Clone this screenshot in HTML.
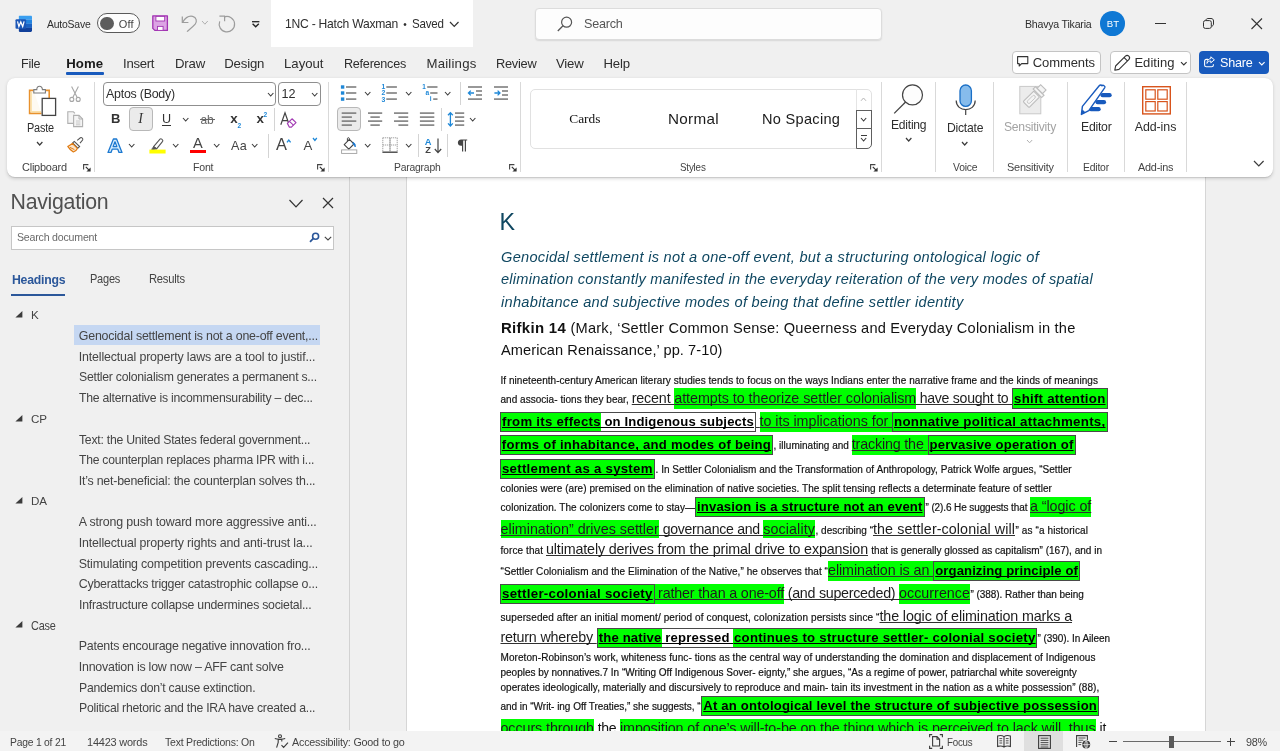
<!DOCTYPE html>
<html><head><meta charset="utf-8"><title>1NC - Hatch Waxman - Word</title>
<style>
html,body{margin:0;padding:0;}
body{width:1280px;height:751px;overflow:hidden;position:relative;background:#f0f0f0;font-family:"Liberation Sans",sans-serif;color:#242424;}
.a{position:absolute;box-sizing:border-box;}
.t{position:absolute;white-space:pre;transform-origin:0 0;}
#w{position:absolute;left:0;top:0;width:1280px;height:751px;will-change:transform;}
svg{position:absolute;overflow:visible;}
.S{color:#111;-webkit-text-stroke:0.18px #111;}
.U,.HU,.B,.BH{text-decoration:underline;text-decoration-thickness:1px;text-underline-offset:1px;text-decoration-skip-ink:none;}
.U,.HU{color:#1c1c1c;text-decoration-color:#303030;}
.B,.BH{font-weight:bold;text-decoration-thickness:1.1px;}
.P{color:#111;}
.B,.BH{color:#000;}
.hd{color:#0f4761;}
.hi{color:#0f4761;font-style:italic;}
.nv{color:#444;}
.ui{color:#2e2e2e;}
.gl{color:#444;}
</style></head><body><div id="w">

<div class="a" style="left:350px;top:177px;width:930px;height:554px;background:#f0f0f0;"></div>
<div class="a" style="left:406px;top:177px;width:800px;height:554px;background:#fff;border-left:1px solid #d6d6d6;border-right:1px solid #d6d6d6;"></div>
<span class="t hd" style="left:499.6px;top:208px;font-size:23.3px;line-height:28px;">K</span>
<span class="t hi" style="left:501px;top:248px;font-size:14.6px;line-height:18px;letter-spacing:0.285px;">Genocidal settlement is not a one-off event, but a structuring ontological logic of</span>
<span class="t hi" style="left:501px;top:270px;font-size:14.6px;line-height:18px;letter-spacing:0.25px;">elimination constantly manifested in the everyday reiteration of the very modes of spatial</span>
<span class="t hi" style="left:501px;top:293px;font-size:14.6px;line-height:18px;letter-spacing:0.291px;">inhabitance and subjective modes of being that define settler identity</span>
<span class="t P" style="left:501px;top:319px;font-size:14.6px;line-height:18px;font-weight:bold;letter-spacing:0.292px;transform:scaleX(1.0243);">Rifkin 14</span>
<span class="t P" style="left:570.5px;top:319px;font-size:14.6px;line-height:18px;letter-spacing:0.189px;">(Mark, ‘Settler Common Sense: Queerness and Everyday Colonialism in the</span>
<span class="t P" style="left:501px;top:341px;font-size:14.6px;line-height:18px;letter-spacing:0.069px;">American Renaissance,’ pp. 7-10)</span>
<span class="t S" style="left:500.5px;top:374px;font-size:10px;line-height:13px;letter-spacing:0.049px;">If nineteenth-century American literary studies tends to focus on the ways Indians enter the narrative frame and the kinds of meanings</span>
<span class="t S" style="left:500.5px;top:393px;font-size:10px;line-height:13px;letter-spacing:0.031px;">and associa- tions they bear, </span>
<span class="t U" style="left:631.75px;top:389px;font-size:14.3px;line-height:18px;letter-spacing:-0.174px;">recent </span>
<div class="a" style="left:674.25px;top:388.1px;width:242px;height:20.8px;background:#00ff00;"></div>
<span class="t HU" style="left:674.25px;top:389px;font-size:14.3px;line-height:18px;letter-spacing:-0.029px;">attempts to theorize settler colonialism</span>
<span class="t U" style="left:916.25px;top:389px;font-size:14.3px;line-height:18px;letter-spacing:-0.286px;transform:scaleX(0.9879);"> have sought to </span>
<div class="a" style="left:1012.25px;top:388.1px;width:94.75px;height:20.8px;background:#00ff00;"></div>
<span class="t B" style="left:1014px;top:390px;font-size:13.1px;line-height:17px;letter-spacing:0.262px;transform:scaleX(1.0111);">shift attention</span>
<div class="a" style="left:500.5px;top:412px;width:100.5px;height:20px;background:#00ff00;"></div>
<span class="t B" style="left:501.8px;top:413px;font-size:13.1px;line-height:17px;letter-spacing:0.262px;transform:scaleX(1.0075);">from its effects</span>
<span class="t B" style="left:600.6px;top:413px;font-size:13.1px;line-height:17px;letter-spacing:0.153px;"> on Indigenous subjects</span>
<span class="t U" style="left:755.75px;top:412px;font-size:14.3px;line-height:18px;"> </span>
<div class="a" style="left:759.5px;top:412px;width:132.75px;height:20px;background:#00ff00;"></div>
<span class="t HU" style="left:759.5px;top:412px;font-size:14.3px;line-height:18px;letter-spacing:-0.031px;">to its implications for </span>
<div class="a" style="left:892.25px;top:412px;width:214.75px;height:20px;background:#00ff00;"></div>
<span class="t B" style="left:894px;top:413px;font-size:13.1px;line-height:17px;letter-spacing:0.262px;transform:scaleX(1.0181);">nonnative political attachments,</span>
<div class="a" style="left:500.5px;top:435.3px;width:272.25px;height:20px;background:#00ff00;"></div>
<span class="t B" style="left:501.8px;top:436px;font-size:13.1px;line-height:17px;letter-spacing:0.237px;">forms of inhabitance, and modes of being</span>
<span class="t S" style="left:773.5px;top:439px;font-size:10px;line-height:13px;letter-spacing:0.022px;">, illuminating and </span>
<div class="a" style="left:851.75px;top:435.3px;width:75.75px;height:20px;background:#00ff00;"></div>
<span class="t HU" style="left:851.75px;top:435px;font-size:14.3px;line-height:18px;letter-spacing:-0.165px;">tracking the </span>
<div class="a" style="left:927.5px;top:435.3px;width:147.5px;height:20px;background:#00ff00;"></div>
<span class="t B" style="left:929.5px;top:436px;font-size:13.1px;line-height:17px;letter-spacing:0.195px;">pervasive operation of</span>
<div class="a" style="left:500.5px;top:458.7px;width:153.75px;height:20px;background:#00ff00;"></div>
<span class="t B" style="left:501.8px;top:460px;font-size:13.1px;line-height:17px;letter-spacing:0.262px;transform:scaleX(1.0104);">settlement as a system</span>
<span class="t S" style="left:655.5px;top:463px;font-size:10px;line-height:13px;letter-spacing:0.038px;">. In Settler Colonialism and the Transformation of Anthropology, Patrick Wolfe argues, “Settler</span>
<span class="t S" style="left:500.5px;top:482px;font-size:10px;line-height:13px;letter-spacing:0.054px;">colonies were (are) premised on the elimination of native societies. The split tensing reflects a determinate feature of settler</span>
<span class="t S" style="left:500.5px;top:501px;font-size:10px;line-height:13px;letter-spacing:0.043px;">colonization. The colonizers come to stay—</span>
<div class="a" style="left:695px;top:497.15px;width:229.25px;height:20px;background:#00ff00;"></div>
<span class="t B" style="left:697px;top:498px;font-size:13.1px;line-height:17px;letter-spacing:0.16px;">invasion is a structure not an event</span>
<span class="t S" style="left:925.5px;top:501px;font-size:10px;line-height:13px;letter-spacing:-0.111px;">” (2).6 He suggests that </span>
<div class="a" style="left:1030px;top:497.15px;width:61.25px;height:20px;background:#00ff00;"></div>
<span class="t HU" style="left:1030px;top:497px;font-size:14.3px;line-height:18px;letter-spacing:-0.067px;">a “logic of</span>
<div class="a" style="left:500.5px;top:520.05px;width:158.25px;height:17.9px;background:#00ff00;"></div>
<span class="t HU" style="left:500.5px;top:520px;font-size:14.3px;line-height:18px;letter-spacing:0.005px;">elimination” drives settler</span>
<span class="t U" style="left:658.75px;top:520px;font-size:14.3px;line-height:18px;letter-spacing:-0.286px;transform:scaleX(0.9866);"> governance and </span>
<div class="a" style="left:763.25px;top:520.05px;width:51.75px;height:17.9px;background:#00ff00;"></div>
<span class="t HU" style="left:763.25px;top:520px;font-size:14.3px;line-height:18px;letter-spacing:0.099px;">sociality</span>
<span class="t S" style="left:815.5px;top:524px;font-size:10px;line-height:13px;letter-spacing:0.018px;">, describing “</span>
<span class="t U" style="left:873px;top:520px;font-size:14.3px;line-height:18px;letter-spacing:0.086px;">the settler-colonial will</span>
<span class="t S" style="left:1015.5px;top:524px;font-size:10px;line-height:13px;letter-spacing:0.107px;">” as “a historical</span>
<span class="t S" style="left:500.5px;top:544px;font-size:10px;line-height:13px;letter-spacing:0.094px;">force that </span>
<span class="t U" style="left:546px;top:540px;font-size:14.3px;line-height:18px;letter-spacing:-0.147px;">ultimately derives from the primal drive to expansion</span>
<span class="t S" style="left:868.5px;top:544px;font-size:10px;line-height:13px;letter-spacing:0.011px;"> that is generally glossed as capitalism” (167), and in</span>
<span class="t S" style="left:500.5px;top:565px;font-size:10px;line-height:13px;letter-spacing:0.068px;">“Settler Colonialism and the Elimination of the Native,” he observes that “</span>
<div class="a" style="left:828px;top:561.2px;width:105.25px;height:20px;background:#00ff00;"></div>
<span class="t HU" style="left:828px;top:561px;font-size:14.3px;line-height:18px;letter-spacing:-0.069px;">elimination is an </span>
<div class="a" style="left:933.25px;top:561.2px;width:146.25px;height:20px;background:#00ff00;"></div>
<span class="t B" style="left:935.25px;top:562px;font-size:13.1px;line-height:17px;letter-spacing:0.102px;">organizing principle of</span>
<div class="a" style="left:500.5px;top:584.15px;width:153.75px;height:20px;background:#00ff00;"></div>
<span class="t B" style="left:501.8px;top:585px;font-size:13.1px;line-height:17px;letter-spacing:0.262px;transform:scaleX(1.0169);">settler-colonial society</span>
<div class="a" style="left:654.25px;top:584.15px;width:129.75px;height:20px;background:#00ff00;"></div>
<span class="t HU" style="left:654.25px;top:584px;font-size:14.3px;line-height:18px;letter-spacing:-0.16px;"> rather than a one-off</span>
<span class="t U" style="left:784px;top:584px;font-size:14.3px;line-height:18px;letter-spacing:-0.279px;"> (and superceded) </span>
<div class="a" style="left:899px;top:584.15px;width:71px;height:20px;background:#00ff00;"></div>
<span class="t HU" style="left:899px;top:584px;font-size:14.3px;line-height:18px;letter-spacing:0.027px;">occurrence</span>
<span class="t S" style="left:970.5px;top:588px;font-size:10px;line-height:13px;letter-spacing:-0.049px;">” (388). Rather than being</span>
<span class="t S" style="left:500.5px;top:611px;font-size:10px;line-height:13px;letter-spacing:0.117px;">superseded after an initial moment/ period of conquest, colonization persists since “</span>
<span class="t U" style="left:879.5px;top:607px;font-size:14.3px;line-height:18px;letter-spacing:-0.118px;">the logic of elimination marks a</span>
<span class="t U" style="left:500.5px;top:628px;font-size:14.3px;line-height:18px;letter-spacing:-0.206px;">return whereby </span>
<div class="a" style="left:596.75px;top:628.1px;width:65.25px;height:20px;background:#00ff00;"></div>
<div class="a" style="left:733px;top:628.1px;width:303.75px;height:20px;background:#00ff00;"></div>
<span class="t B" style="left:598.75px;top:629px;font-size:13.1px;line-height:17px;letter-spacing:0.163px;">the native</span>
<span class="t B" style="left:661.5px;top:629px;font-size:13.1px;line-height:17px;letter-spacing:0.193px;"> repressed </span>
<span class="t B" style="left:733.5px;top:629px;font-size:13.1px;line-height:17px;letter-spacing:0.262px;transform:scaleX(1.0051);">continues to structure settler- colonial society</span>
<span class="t S" style="left:1037.5px;top:632px;font-size:10px;line-height:13px;letter-spacing:-0.049px;">” (390). In Aileen</span>
<span class="t S" style="left:500.5px;top:651px;font-size:10px;line-height:13px;letter-spacing:0.077px;">Moreton-Robinson’s work, whiteness func- tions as the central way of understanding the domination and displacement of Indigenous</span>
<span class="t S" style="left:500.5px;top:666px;font-size:10px;line-height:13px;letter-spacing:-0.014px;">peoples by nonnatives.7 In “Writing Off Indigenous Sover- eignty,” she argues, “As a regime of power, patriarchal white sovereignty</span>
<span class="t S" style="left:500.5px;top:681px;font-size:10px;line-height:13px;letter-spacing:0.055px;">operates ideologically, materially and discursively to reproduce and main- tain its investment in the nation as a white possession” (88),</span>
<span class="t S" style="left:500.5px;top:700px;font-size:10px;line-height:13px;letter-spacing:-0.029px;">and in “Writ- ing Off Treaties,” she suggests, “</span>
<div class="a" style="left:701.25px;top:695.9px;width:397.5px;height:20px;background:#00ff00;"></div>
<span class="t B" style="left:703.25px;top:697px;font-size:13.1px;line-height:17px;letter-spacing:0.19px;">At an ontological level the structure of subjective possession</span>
<div class="a" style="left:500.5px;top:719.1px;width:93.5px;height:17.9px;background:#00ff00;"></div>
<span class="t HU" style="left:500.5px;top:719px;font-size:14.3px;line-height:18px;letter-spacing:-0.077px;">occurs through</span>
<span class="t P" style="left:594px;top:719px;font-size:14.3px;line-height:18px;letter-spacing:-0.286px;transform:scaleX(0.9849);"> the </span>
<div class="a" style="left:620px;top:719.1px;width:475.5px;height:17.9px;background:#00ff00;"></div>
<span class="t HU" style="left:620px;top:719px;font-size:14.3px;line-height:18px;letter-spacing:-0.091px;">imposition of one’s will-to-be on the thing which is perceived to lack will, thus</span>
<span class="t P" style="left:1095.5px;top:719px;font-size:14.3px;line-height:18px;letter-spacing:-0.286px;transform:scaleX(0.974);"> it</span>
<div class="a" style="left:1012.25px;top:388.1px;width:95.25px;height:20.8px;border:1px solid #4a4a4a;"></div>
<div class="a" style="left:500px;top:412px;width:256.25px;height:20px;border:1px solid #4a4a4a;"></div>
<div class="a" style="left:892.25px;top:412px;width:215.25px;height:20px;border:1px solid #4a4a4a;"></div>
<div class="a" style="left:500px;top:435.3px;width:273.25px;height:20px;border:1px solid #4a4a4a;"></div>
<div class="a" style="left:927.5px;top:435.3px;width:148px;height:20px;border:1px solid #4a4a4a;"></div>
<div class="a" style="left:500px;top:458.7px;width:154.75px;height:20px;border:1px solid #4a4a4a;"></div>
<div class="a" style="left:695px;top:497.15px;width:229.75px;height:20px;border:1px solid #4a4a4a;"></div>
<div class="a" style="left:933.25px;top:561.2px;width:146.75px;height:20px;border:1px solid #4a4a4a;"></div>
<div class="a" style="left:500px;top:584.15px;width:154.75px;height:20px;border:1px solid #4a4a4a;"></div>
<div class="a" style="left:596.75px;top:628.1px;width:440.5px;height:20px;border:1px solid #4a4a4a;"></div>
<div class="a" style="left:701.25px;top:695.9px;width:398px;height:20px;border:1px solid #4a4a4a;"></div>
<div class="a" style="left:0px;top:177px;width:350px;height:552.5px;background:#f0f0f0;border-right:1px solid #d2d2d2;"></div>
<span class="t ui" style="left:10.6px;top:189px;font-size:21.3px;line-height:26px;color:#505050;letter-spacing:-0.284px;">Navigation</span>
<svg style="left:288px;top:197px" width="16" height="12" viewBox="0 0 16 12"><path d="M1.5 3 L8 9.8 L14.5 3" fill="none" stroke="#333" stroke-width="1.2"/></svg>
<svg style="left:322px;top:197px" width="12" height="12" viewBox="0 0 12 12"><path d="M1 1 L11 11 M11 1 L1 11" fill="none" stroke="#333" stroke-width="1.2"/></svg>
<div class="a" style="left:11px;top:226px;width:323px;height:24px;background:#fff;border:1px solid #c6c6c6;"></div>
<span class="t ui" style="left:17px;top:230px;font-size:11px;line-height:14px;color:#6a6a6a;letter-spacing:-0.22px;transform:scaleX(0.9648);">Search document</span>
<svg style="left:309px;top:232px" width="11" height="11" viewBox="0 0 11 11"><circle cx="6.6" cy="4.2" r="3" fill="none" stroke="#2b579a" stroke-width="1.6"/><path d="M4.4 6.4 L1 9.8" stroke="#2b579a" stroke-width="1.8" fill="none"/></svg>
<svg style="left:324px;top:236px" width="8" height="5" viewBox="0 0 8 5"><path d="M0.8 0.8 L4 4 L7.2 0.8" fill="none" stroke="#444" stroke-width="1.1"/></svg>
<span class="t ui" style="left:11.5px;top:272px;font-size:12.6px;line-height:16px;color:#2b579a;font-weight:bold;letter-spacing:-0.252px;transform:scaleX(0.9749);">Headings</span>
<div class="a" style="left:11px;top:294px;width:54px;height:2px;background:#2b579a;"></div>
<span class="t nv" style="left:90.2px;top:271px;font-size:12.4px;line-height:16px;letter-spacing:-0.248px;transform:scaleX(0.8879);">Pages</span>
<span class="t nv" style="left:148.5px;top:271px;font-size:12.4px;line-height:16px;letter-spacing:-0.248px;transform:scaleX(0.9042);">Results</span>
<svg style="left:14.5px;top:311.1px" width="8" height="7" viewBox="0 0 8 7"><path d="M7.4 0 L7.4 6.6 L0.4 6.6 Z" fill="#3b3b3b"/></svg>
<span class="t nv" style="left:30.9px;top:308px;font-size:11.6px;line-height:14px;">K</span>
<div class="a" style="left:74px;top:324.88px;width:246.2px;height:20.2px;background:#c5d7f2;"></div>
<span class="t nv" style="left:78.8px;top:328px;font-size:12.4px;line-height:16px;letter-spacing:-0.211px;">Genocidal settlement is not a one-off event,...</span>
<span class="t nv" style="left:78.8px;top:349px;font-size:12.4px;line-height:16px;letter-spacing:-0.16px;">Intellectual property laws are a tool to justif...</span>
<span class="t nv" style="left:78.8px;top:369px;font-size:12.4px;line-height:16px;letter-spacing:-0.248px;transform:scaleX(0.9881);">Settler colonialism generates a permanent s...</span>
<span class="t nv" style="left:78.8px;top:390px;font-size:12.4px;line-height:16px;letter-spacing:-0.248px;transform:scaleX(0.9881);">The alternative is incommensurability – dec...</span>
<svg style="left:14.5px;top:414.5px" width="8" height="7" viewBox="0 0 8 7"><path d="M7.4 0 L7.4 6.6 L0.4 6.6 Z" fill="#3b3b3b"/></svg>
<span class="t nv" style="left:30.9px;top:412px;font-size:11.6px;line-height:14px;">CP</span>
<span class="t nv" style="left:78.8px;top:432px;font-size:12.4px;line-height:16px;letter-spacing:-0.248px;transform:scaleX(0.9879);">Text: the United States federal government...</span>
<span class="t nv" style="left:78.8px;top:452px;font-size:12.4px;line-height:16px;letter-spacing:-0.248px;transform:scaleX(0.9791);">The counterplan replaces pharma IPR with i...</span>
<span class="t nv" style="left:78.8px;top:473px;font-size:12.4px;line-height:16px;letter-spacing:-0.229px;">It’s net-beneficial: the counterplan solves th...</span>
<svg style="left:14.5px;top:497.22px" width="8" height="7" viewBox="0 0 8 7"><path d="M7.4 0 L7.4 6.6 L0.4 6.6 Z" fill="#3b3b3b"/></svg>
<span class="t nv" style="left:30.9px;top:494px;font-size:11.6px;line-height:14px;">DA</span>
<span class="t nv" style="left:78.8px;top:514px;font-size:12.4px;line-height:16px;letter-spacing:-0.168px;">A strong push toward more aggressive anti...</span>
<span class="t nv" style="left:78.8px;top:535px;font-size:12.4px;line-height:16px;letter-spacing:-0.15px;">Intellectual property rights and anti-trust la...</span>
<span class="t nv" style="left:78.8px;top:556px;font-size:12.4px;line-height:16px;letter-spacing:-0.21px;">Stimulating competition prevents cascading...</span>
<span class="t nv" style="left:78.8px;top:576px;font-size:12.4px;line-height:16px;letter-spacing:-0.248px;">Cyberattacks trigger catastrophic collapse o...</span>
<span class="t nv" style="left:78.8px;top:597px;font-size:12.4px;line-height:16px;letter-spacing:-0.248px;transform:scaleX(0.9912);">Infrastructure collapse undermines societal...</span>
<svg style="left:14.5px;top:621.3px" width="8" height="7" viewBox="0 0 8 7"><path d="M7.4 0 L7.4 6.6 L0.4 6.6 Z" fill="#3b3b3b"/></svg>
<span class="t nv" style="left:30.9px;top:618px;font-size:12.4px;line-height:16px;letter-spacing:-0.248px;transform:scaleX(0.8803);">Case</span>
<span class="t nv" style="left:78.8px;top:638px;font-size:12.4px;line-height:16px;letter-spacing:-0.248px;">Patents encourage negative innovation fro...</span>
<span class="t nv" style="left:78.8px;top:659px;font-size:12.4px;line-height:16px;letter-spacing:-0.229px;">Innovation is low now – AFF cant solve</span>
<span class="t nv" style="left:78.8px;top:680px;font-size:12.4px;line-height:16px;letter-spacing:-0.248px;transform:scaleX(0.984);">Pandemics don’t cause extinction.</span>
<span class="t nv" style="left:78.8px;top:700px;font-size:12.4px;line-height:16px;letter-spacing:-0.248px;transform:scaleX(0.9862);">Political rhetoric and the IRA have created a...</span>
<svg style="left:14.5px;top:14.5px" width="17.5" height="17.5" viewBox="0 0 17.5 17.5" ><defs><clipPath id="wc"><rect x="3.6" y="0.5" width="13.4" height="16.4" rx="1.3"/></clipPath></defs>
<g clip-path="url(#wc)"><rect x="3.6" y="0.5" width="13.4" height="4.2" fill="#3a9ff0"/><rect x="3.6" y="4.6" width="13.4" height="4.2" fill="#2384e0"/><rect x="3.6" y="8.7" width="13.4" height="4.2" fill="#1a62c4"/><rect x="3.6" y="12.8" width="13.4" height="4.2" fill="#11409a"/></g>
<rect x="0.5" y="4.2" width="10.6" height="9.6" rx="1.1" fill="#1b56b6"/>
<path d="M2.5 6.4 L3.9 11.6 L5.8 6.9 L7.7 11.6 L9.1 6.4" fill="none" stroke="#fff" stroke-width="1.25" stroke-linejoin="miter"/></svg>
<span class="t ui" style="left:47px;top:17px;font-size:11.6px;line-height:14px;letter-spacing:-0.232px;transform:scaleX(0.8983);">AutoSave</span>
<div class="a" style="left:97px;top:13.2px;width:43px;height:20.2px;border:1px solid #5a5a5a;border-radius:11px;background:#fdfdfd;"></div>
<div class="a" style="left:100.3px;top:16.5px;width:13.4px;height:13.4px;background:#5d5d5d;border-radius:7px;"></div>
<span class="t ui" style="left:118.75px;top:17px;font-size:11px;line-height:14px;color:#444;letter-spacing:0.172px;">Off</span>
<svg style="left:152px;top:15px" width="16.4" height="16.4" viewBox="0 0 16.4 16.4" ><path d="M0.8 0.8 H15.4 V15.4 H2.8 L0.8 13.4 Z" fill="#dca4e4" stroke="#a234b2" stroke-width="1.3" stroke-linejoin="round"/>
<rect x="3.9" y="1.4" width="8.8" height="4.6" fill="#fff" stroke="#a234b2" stroke-width="0.9"/><rect x="5.5" y="11.4" width="5.6" height="4" fill="#fff" stroke="#a234b2" stroke-width="0.9"/></svg>
<svg style="left:181px;top:14.5px" width="17" height="18" viewBox="0 0 17 18" ><path d="M1.3 1.4 V7.5 H7.4" fill="none" stroke="#9c9c9c" stroke-width="1.2"/><path d="M1.7 7.1 C4 3.2 8 0.6 11.6 1.3 C15.6 2.2 16.2 6.6 14.2 9.2 C12 11.8 8.4 14.4 6 16.6" fill="none" stroke="#9c9c9c" stroke-width="1.2"/></svg>
<svg style="left:201.2px;top:20.4px" width="7.8" height="5.2" viewBox="0 0 7.8 5.2" ><path d="M1 1 L3.9 4.2 L6.8 1" fill="none" stroke="#b0b0b0" stroke-width="1"/></svg>
<svg style="left:218px;top:14.5px" width="18" height="18" viewBox="0 0 18 18" ><path d="M1.4 1.2 H6.6 V6.2" fill="none" stroke="#9c9c9c" stroke-width="1.2"/><path d="M6.4 1.9 A7.7 7.7 0 1 1 1.7 6.4" fill="none" stroke="#9c9c9c" stroke-width="1.2"/></svg>
<svg style="left:252px;top:20.6px" width="7.4" height="6.6" viewBox="0 0 7.4 6.6" ><path d="M0 0.7 H7.4" stroke="#222" stroke-width="1.3"/><path d="M0.6 2.8 L3.7 5.7 L6.8 2.8" fill="none" stroke="#222" stroke-width="1.4"/></svg>
<div class="a" style="left:271px;top:0px;width:201.5px;height:47px;background:#fff;"></div>
<span class="t ui" style="left:285.2px;top:16px;font-size:12.6px;line-height:16px;letter-spacing:-0.252px;transform:scaleX(0.9627);">1NC - Hatch Waxman</span>
<span class="t ui" style="left:403.2px;top:18px;font-size:10px;line-height:13px;">•</span>
<span class="t ui" style="left:412.3px;top:16px;font-size:12.6px;line-height:16px;letter-spacing:-0.252px;transform:scaleX(0.9199);">Saved</span>
<svg style="left:449.25px;top:20.55px" width="10.5" height="6.5" viewBox="0 0 10.5 6.5" ><path d="M1 1 L5.25 5.5 L9.5 1" fill="none" stroke="#333" stroke-width="1.2"/></svg>
<div class="a" style="left:535px;top:7.5px;width:346.5px;height:32px;background:#fdfdfd;border:1px solid #dcdcdc;border-radius:4px;box-shadow:0 1px 1.5px rgba(0,0,0,0.10);"></div>
<svg style="left:557px;top:16px" width="16" height="16" viewBox="0 0 16 16" ><circle cx="9.6" cy="6.2" r="5" fill="none" stroke="#555" stroke-width="1.2"/><path d="M6 9.8 L0.8 15" stroke="#555" stroke-width="1.3"/></svg>
<span class="t ui" style="left:584px;top:15px;font-size:12.8px;line-height:17px;color:#555;letter-spacing:-0.256px;transform:scaleX(0.9869);">Search</span>
<span class="t ui" style="left:1024.5px;top:17px;font-size:11px;line-height:14px;letter-spacing:-0.22px;transform:scaleX(0.9627);">Bhavya Tikaria</span>
<div class="a" style="left:1100px;top:11.2px;width:24.6px;height:24.6px;background:#0f78d4;border-radius:50%;"></div>
<span class="t" style="left:1106.8px;top:17px;font-size:9.6px;line-height:13px;color:#fff;">BT</span>
<div class="a" style="left:1155px;top:22.5px;width:11px;height:1px;background:#333;"></div>
<svg style="left:1203px;top:18px" width="11" height="11" viewBox="0 0 11 11" ><rect x="0.5" y="2.6" width="7.8" height="7.8" rx="1.8" fill="none" stroke="#333" stroke-width="1"/><path d="M2.8 2.4 C3 1.2 3.8 0.5 5 0.5 H8 C9.6 0.5 10.5 1.4 10.5 3 V6 C10.5 7.2 9.8 8 8.6 8.2" fill="none" stroke="#333" stroke-width="1"/></svg>
<svg style="left:1251px;top:18px" width="11.5" height="11.5" viewBox="0 0 11.5 11.5" ><path d="M0.5 0.5 L11 11 M11 0.5 L0.5 11" stroke="#333" stroke-width="1.1"/></svg>
<span class="t ui" style="left:20.75px;top:55px;font-size:13.2px;line-height:17px;letter-spacing:-0.264px;transform:scaleX(0.9533);">File</span>
<span class="t ui" style="left:123px;top:55px;font-size:13.2px;line-height:17px;letter-spacing:-0.264px;transform:scaleX(0.9952);">Insert</span>
<span class="t ui" style="left:175px;top:55px;font-size:13.2px;line-height:17px;letter-spacing:-0.195px;">Draw</span>
<span class="t ui" style="left:224.25px;top:55px;font-size:13.2px;line-height:17px;letter-spacing:-0.177px;">Design</span>
<span class="t ui" style="left:284px;top:55px;font-size:13.2px;line-height:17px;letter-spacing:-0.018px;">Layout</span>
<span class="t ui" style="left:344px;top:55px;font-size:13.2px;line-height:17px;letter-spacing:-0.264px;transform:scaleX(0.9566);">References</span>
<span class="t ui" style="left:426.5px;top:55px;font-size:13.2px;line-height:17px;letter-spacing:0.203px;">Mailings</span>
<span class="t ui" style="left:496px;top:55px;font-size:13.2px;line-height:17px;letter-spacing:-0.264px;transform:scaleX(0.972);">Review</span>
<span class="t ui" style="left:556px;top:55px;font-size:13.2px;line-height:17px;letter-spacing:-0.215px;">View</span>
<span class="t ui" style="left:603.5px;top:55px;font-size:13.2px;line-height:17px;letter-spacing:-0.156px;">Help</span>
<span class="t ui" style="left:66.25px;top:55px;font-size:13.2px;line-height:17px;font-weight:bold;color:#1a1a1a;letter-spacing:0.027px;">Home</span>
<div class="a" style="left:66px;top:72.3px;width:37.6px;height:2.3px;background:#185abd;border-radius:1px;"></div>
<div class="a" style="left:1012px;top:50.5px;width:89px;height:23.5px;background:#fff;border:1px solid #c4c4c4;border-radius:4px;"></div>
<svg style="left:1017px;top:56px" width="11.5" height="11" viewBox="0 0 11.5 11" ><path d="M0.6 0.6 H10.8 V7.6 H4.6 L2.2 10 V7.6 H0.6 Z" fill="none" stroke="#333" stroke-width="1.1" stroke-linejoin="round"/></svg>
<span class="t ui" style="left:1032.7px;top:54px;font-size:13px;line-height:17px;letter-spacing:-0.07px;">Comments</span>
<div class="a" style="left:1109.5px;top:50.5px;width:81.5px;height:23.5px;background:#fff;border:1px solid #c4c4c4;border-radius:4px;"></div>
<svg style="left:1114px;top:54.5px" width="16" height="16" viewBox="0 0 16 16" ><path d="M11.4 1.2 C12.4 0.2 14 0.4 14.8 1.2 C15.6 2 15.8 3.6 14.8 4.6 L5 14.4 L0.8 15.2 L1.6 11 Z M10.2 2.6 L13.4 5.8" fill="none" stroke="#333" stroke-width="1.1" stroke-linejoin="round"/></svg>
<span class="t ui" style="left:1134.4px;top:54px;font-size:13px;line-height:17px;letter-spacing:0.05px;">Editing</span>
<svg style="left:1180.2px;top:60.5px" width="7.6" height="5" viewBox="0 0 7.6 5" ><path d="M1 1 L3.8 4 L6.6 1" fill="none" stroke="#333" stroke-width="1.1"/></svg>
<div class="a" style="left:1199px;top:50.5px;width:70px;height:23.5px;background:#185abd;border-radius:4px;"></div>
<svg style="left:1203.5px;top:56px" width="11" height="11.5" viewBox="0 0 11 11.5" ><path d="M4 3.4 H2.4 C1.2 3.4 0.6 4 0.6 5.2 V9 C0.6 10.2 1.2 10.8 2.4 10.8 H7.6 C8.8 10.8 9.4 10.2 9.4 9 V8.2" fill="none" stroke="#fff" stroke-width="1.1"/><path d="M6.8 0.8 L10.4 3.8 L6.8 6.8 V5 C5 5 3.8 5.6 3 7.4 C3 4.6 4.4 2.8 6.8 2.6 Z" fill="none" stroke="#fff" stroke-width="1" stroke-linejoin="round"/></svg>
<span class="t" style="left:1220.2px;top:54px;font-size:13px;line-height:17px;color:#fff;letter-spacing:-0.26px;transform:scaleX(0.97);">Share</span>
<svg style="left:1257.5px;top:60.5px" width="7.6" height="5" viewBox="0 0 7.6 5" ><path d="M1 1 L3.8 4 L6.6 1" fill="none" stroke="#fff" stroke-width="1.1"/></svg>
<div class="a" style="left:7px;top:77.5px;width:1266px;height:99.7px;background:#fff;border-radius:8px;box-shadow:0 1.6px 3.6px rgba(0,0,0,0.14),0 0.3px 0.9px rgba(0,0,0,0.11);"></div>
<svg style="left:27px;top:85px" width="30" height="32" viewBox="0 0 30 32" ><path d="M6.6 5.4 H2.6 V28.4 H14.5" fill="#fefaf2" stroke="#e8912d" stroke-width="1.6"/><path d="M4.2 7 V26.8 H14" fill="none" stroke="#fbe0a8" stroke-width="1.4"/><path d="M18.6 5.4 H22.2 V13" fill="none" stroke="#e8912d" stroke-width="1.6"/>
<path d="M3.4 6 V27.6 H14" fill="none" stroke="#f8d9a0" stroke-width="0"/>
<path d="M6.8 8 V4.6 H9.8 C9.8 0.2 15.4 0.2 15.4 4.6 H18.4 V8 Z" fill="#fff" stroke="#7a7a7a" stroke-width="1.1"/>
<rect x="15.2" y="13.4" width="13.4" height="17" fill="#fff" stroke="#444" stroke-width="1.3"/></svg>
<span class="t ui" style="left:26.6px;top:120px;font-size:12px;line-height:16px;letter-spacing:-0.24px;transform:scaleX(0.9089);">Paste</span>
<svg style="left:35.7px;top:140.8px" width="7.4" height="5" viewBox="0 0 7.4 5" ><path d="M1 1 L3.7 4 L6.4 1" fill="none" stroke="#3b3b3b" stroke-width="1.2"/></svg>
<svg style="left:69px;top:85.5px" width="12" height="16.5" viewBox="0 0 12 16.5" ><path d="M2.6 0.6 L8.2 11.4 M9.4 0.6 L3.8 11.4" fill="none" stroke="#a6a6a6" stroke-width="1.1"/><circle cx="2.8" cy="13.4" r="2" fill="none" stroke="#a6a6a6" stroke-width="1.1"/><circle cx="9.2" cy="13.4" r="2" fill="none" stroke="#a6a6a6" stroke-width="1.1"/></svg>
<svg style="left:66.5px;top:111px" width="17" height="16.5" viewBox="0 0 17 16.5" ><path d="M6 12.4 H0.8 V0.8 H6.4 L8 2.4" fill="#f4f4f4" stroke="#b0b0b0" stroke-width="1.1"/><path d="M6.6 4.4 H12 L15.6 8 V15.6 H6.6 Z" fill="#f4f4f4" stroke="#b0b0b0" stroke-width="1.1"/><path d="M12 4.4 V8 H15.6" fill="none" stroke="#b0b0b0" stroke-width="1"/><path d="M9 10 H13.4 M9 12 H13.4 M9 13.8 H13.4" stroke="#c4c4c4" stroke-width="0.9"/></svg>
<svg style="left:66.5px;top:137px" width="17.5" height="16" viewBox="0 0 17.5 16" ><path d="M10.2 3.4 L13.4 0.8 C14.6 0 16.4 1.6 15.6 3 L13 6.2" fill="#fff" stroke="#555" stroke-width="1.1"/><path d="M7.2 4.4 L12.6 9.6 L10.8 11.2 L5.6 6 Z" fill="#fff" stroke="#555" stroke-width="1.1"/>
<path d="M5.4 6.4 L10.4 11.4 C9.6 13 8 14.6 6.4 15 C4.4 13.6 2 11.6 0.8 9.4 C2.2 8.6 4.2 7.6 5.4 6.4 Z" fill="#fbe3c8" stroke="#e07a10" stroke-width="1.2" stroke-linejoin="round"/><path d="M3 10.4 L7.4 12.6" stroke="#e07a10" stroke-width="1"/></svg>
<span class="t gl" style="left:22.1px;top:160px;font-size:11.2px;line-height:14px;letter-spacing:-0.224px;transform:scaleX(0.9788);">Clipboard</span>
<svg style="left:82.8px;top:163.6px" width="8" height="8" viewBox="0 0 8 8" ><path d="M0.6 5.4 V0.6 H5.4" fill="none" stroke="#444" stroke-width="1.1"/><path d="M2.8 2.8 L6.6 6.6" fill="none" stroke="#333" stroke-width="1.2"/><path d="M7.6 3.4 V7.6 H3.4 Z" fill="#333"/></svg>
<div class="a" style="left:94px;top:82px;width:1px;height:89.5px;background:#d9d9d9;"></div>
<div class="a" style="left:103px;top:81.5px;width:172.8px;height:24.1px;background:#fff;border:1px solid #8f8f8f;border-radius:4px;"></div>
<span class="t ui" style="left:105.6px;top:85px;font-size:13px;line-height:17px;letter-spacing:-0.26px;transform:scaleX(0.9565);">Aptos (Body)</span>
<svg style="left:266.5px;top:92.1px" width="7.4" height="5" viewBox="0 0 7.4 5" ><path d="M1 1 L3.7 4 L6.4 1" fill="none" stroke="#3b3b3b" stroke-width="1.1"/></svg>
<div class="a" style="left:278.4px;top:81.5px;width:42.4px;height:24.1px;background:#fff;border:1px solid #8f8f8f;border-radius:4px;"></div>
<span class="t ui" style="left:281.6px;top:86px;font-size:12.6px;line-height:16px;">12</span>
<svg style="left:310.7px;top:92.1px" width="7.4" height="5" viewBox="0 0 7.4 5" ><path d="M1 1 L3.7 4 L6.4 1" fill="none" stroke="#3b3b3b" stroke-width="1.1"/></svg>
<span class="t" style="left:110.9px;top:110px;font-size:13px;line-height:17px;font-weight:bold;color:#333;">B</span>
<div class="a" style="left:129px;top:107.2px;width:23.8px;height:24.3px;background:#ebebeb;border:1px solid #b8b8b8;border-radius:4px;"></div>
<span class="t" style="left:138.2px;top:110px;font-size:14px;line-height:17px;font-family:'Liberation Serif', serif;font-style:italic;color:#333;">I</span>
<span class="t" style="left:162px;top:111px;font-size:12.6px;line-height:16px;color:#333;">U</span>
<div class="a" style="left:162px;top:125px;width:8.6px;height:1.1px;background:#333;"></div>
<svg style="left:181.8px;top:117.4px" width="7.4" height="5" viewBox="0 0 7.4 5" ><path d="M1 1 L3.7 4 L6.4 1" fill="none" stroke="#3b3b3b" stroke-width="1.1"/></svg>
<span class="t" style="left:200.6px;top:112px;font-size:12px;line-height:16px;color:#666;letter-spacing:-0.3px;">ab</span>
<div class="a" style="left:199.5px;top:119.2px;width:15.9px;height:1px;background:#666;"></div>
<span class="t" style="left:230.2px;top:110px;font-size:13.4px;line-height:17px;color:#333;font-weight:bold;">x</span>
<span class="t" style="left:237.4px;top:121px;font-size:6.6px;line-height:9px;color:#1e88d8;font-weight:bold;">2</span>
<span class="t" style="left:256.4px;top:110px;font-size:13.4px;line-height:17px;color:#333;font-weight:bold;">x</span>
<span class="t" style="left:263.4px;top:110px;font-size:6.6px;line-height:9px;color:#1e88d8;font-weight:bold;">2</span>
<div class="a" style="left:273.5px;top:108px;width:1px;height:23px;background:#d4d4d4;"></div>
<svg style="left:280px;top:111.5px" width="17" height="16" viewBox="0 0 17 16" ><path d="M0.8 12.8 L5 0.8 L9.2 12.8 M2.4 8.6 H7.6" fill="none" stroke="#444" stroke-width="1.2"/>
<path d="M7.4 11.4 L12 6.8 L16 10.6 L11.4 15.2 H9.4 Z" fill="#fff" stroke="#a33cb4" stroke-width="1.2" stroke-linejoin="round"/><path d="M9.4 9.4 L13.4 13.2" stroke="#a33cb4" stroke-width="1.1"/></svg>
<svg style="left:107px;top:137.5px" width="16" height="15.5" viewBox="0 0 16 15.5" ><path d="M1 14.4 L6.4 1 H9.6 L15 14.4 H12 L10.8 11.2 H5.2 L4 14.4 Z M6.2 8.6 H9.8 L8 3.8 Z" fill="#d7ecfb" stroke="#1b78d0" stroke-width="1.3" stroke-linejoin="round"/></svg>
<svg style="left:127.8px;top:143.1px" width="7.4" height="5" viewBox="0 0 7.4 5" ><path d="M1 1 L3.7 4 L6.4 1" fill="none" stroke="#3b3b3b" stroke-width="1.1"/></svg>
<svg style="left:148.5px;top:137px" width="17" height="17" viewBox="0 0 17 17" ><path d="M4.6 9.6 L11 2.2 C12 1 14.6 3 13.6 4.4 L7.6 11.8 Z" fill="#fff" stroke="#555" stroke-width="1.1" stroke-linejoin="round"/><path d="M4.6 9.6 L7.6 11.8 L5.4 12.6 L2.6 12.4 Z" fill="#555" stroke="#555" stroke-width="0.8" stroke-linejoin="round"/>
<rect x="0.4" y="12.6" width="16.2" height="3.9" fill="#ffff00"/></svg>
<svg style="left:171.9px;top:143.1px" width="7.4" height="5" viewBox="0 0 7.4 5" ><path d="M1 1 L3.7 4 L6.4 1" fill="none" stroke="#3b3b3b" stroke-width="1.1"/></svg>
<span class="t" style="left:192.9px;top:134px;font-size:14.6px;line-height:18px;color:#444;">A</span>
<div class="a" style="left:189.7px;top:149.5px;width:16px;height:3.9px;background:#ff0000;"></div>
<svg style="left:212.6px;top:143.1px" width="7.4" height="5" viewBox="0 0 7.4 5" ><path d="M1 1 L3.7 4 L6.4 1" fill="none" stroke="#3b3b3b" stroke-width="1.1"/></svg>
<span class="t" style="left:230.9px;top:138px;font-size:12.6px;line-height:16px;color:#444;letter-spacing:0.4px;">Aa</span>
<svg style="left:251.3px;top:143.1px" width="7.4" height="5" viewBox="0 0 7.4 5" ><path d="M1 1 L3.7 4 L6.4 1" fill="none" stroke="#3b3b3b" stroke-width="1.1"/></svg>
<div class="a" style="left:268.2px;top:134px;width:1px;height:23.6px;background:#d4d4d4;"></div>
<span class="t" style="left:276px;top:134px;font-size:16.4px;line-height:20px;color:#444;">A</span>
<svg style="left:285.6px;top:139.2px" width="5.6" height="4.4" viewBox="0 0 5.6 4.4" ><path d="M1 3.4 L2.8 1 L4.6 3.4" fill="none" stroke="#1e88d8" stroke-width="1.3"/></svg>
<span class="t" style="left:303.6px;top:137px;font-size:13.2px;line-height:17px;color:#444;">A</span>
<svg style="left:311.5px;top:136.6px" width="5.8" height="4.4" viewBox="0 0 5.8 4.4" ><path d="M1 1 L2.9 3.4 L4.8 1" fill="none" stroke="#1e88d8" stroke-width="1.3"/></svg>
<span class="t gl" style="left:193px;top:160px;font-size:11.2px;line-height:14px;letter-spacing:-0.224px;transform:scaleX(0.9444);">Font</span>
<svg style="left:316.8px;top:163.6px" width="8" height="8" viewBox="0 0 8 8" ><path d="M0.6 5.4 V0.6 H5.4" fill="none" stroke="#444" stroke-width="1.1"/><path d="M2.8 2.8 L6.6 6.6" fill="none" stroke="#333" stroke-width="1.2"/><path d="M7.6 3.4 V7.6 H3.4 Z" fill="#333"/></svg>
<div class="a" style="left:328.3px;top:82px;width:1px;height:89.5px;background:#d9d9d9;"></div>
<svg style="left:0px;top:0px" width="1" height="1" viewBox="0 0 1 1" ><rect x="340.9" y="85.3" width="3.4" height="3.4" fill="#1e88d8"/><rect x="340.9" y="91.3" width="3.4" height="3.4" fill="#1e88d8"/><rect x="340.9" y="97.4" width="3.4" height="3.4" fill="#1e88d8"/><path d="M346 87 H356.3" stroke="#767676" stroke-width="1.5"/><path d="M346 93 H356.3" stroke="#767676" stroke-width="1.5"/><path d="M346 99.1 H356.3" stroke="#767676" stroke-width="1.5"/></svg>
<svg style="left:364.1px;top:91.4px" width="7.4" height="5" viewBox="0 0 7.4 5" ><path d="M1 1 L3.7 4 L6.4 1" fill="none" stroke="#3b3b3b" stroke-width="1.1"/></svg>
<svg style="left:0px;top:0px" width="1" height="1" viewBox="0 0 1 1" ><path d="M386.3 87 H396.9" stroke="#767676" stroke-width="1.5"/><path d="M386.3 93 H396.9" stroke="#767676" stroke-width="1.5"/><path d="M386.3 99.1 H396.9" stroke="#767676" stroke-width="1.5"/></svg>
<span class="t" style="left:381.6px;top:82px;font-size:6.8px;line-height:9px;color:#1e88d8;font-weight:bold;">1</span>
<span class="t" style="left:381.6px;top:88px;font-size:6.8px;line-height:9px;color:#1e88d8;font-weight:bold;">2</span>
<span class="t" style="left:381.6px;top:95px;font-size:6.8px;line-height:9px;color:#1e88d8;font-weight:bold;">3</span>
<svg style="left:404.8px;top:91.4px" width="7.4" height="5" viewBox="0 0 7.4 5" ><path d="M1 1 L3.7 4 L6.4 1" fill="none" stroke="#3b3b3b" stroke-width="1.1"/></svg>
<svg style="left:0px;top:0px" width="1" height="1" viewBox="0 0 1 1" ><path d="M427.2 87 H437.5" stroke="#767676" stroke-width="1.5"/><path d="M430.2 93 H437.5" stroke="#767676" stroke-width="1.5"/><path d="M433.2 99.1 H437.5" stroke="#767676" stroke-width="1.5"/></svg>
<span class="t" style="left:422.3px;top:82px;font-size:6.4px;line-height:9px;color:#1e88d8;font-weight:bold;">1</span>
<span class="t" style="left:425.4px;top:88px;font-size:6.6px;line-height:9px;color:#1e88d8;font-weight:bold;">a</span>
<span class="t" style="left:429.8px;top:94px;font-size:6.6px;line-height:9px;color:#1e88d8;font-weight:bold;">i</span>
<svg style="left:443.6px;top:91.4px" width="7.4" height="5" viewBox="0 0 7.4 5" ><path d="M1 1 L3.7 4 L6.4 1" fill="none" stroke="#3b3b3b" stroke-width="1.1"/></svg>
<div class="a" style="left:460.2px;top:82px;width:1px;height:23px;background:#d4d4d4;"></div>
<svg style="left:0px;top:0px" width="1" height="1" viewBox="0 0 1 1" ><path d="M468 87 H482" stroke="#767676" stroke-width="1.5"/><path d="M468 99.1 H482" stroke="#767676" stroke-width="1.5"/><path d="M476 91 H482" stroke="#767676" stroke-width="1.5"/><path d="M476 95 H482" stroke="#767676" stroke-width="1.5"/><path d="M474 93 H468.4 M470.8 90.6 L468.4 93 L470.8 95.4" fill="none" stroke="#1e88d8" stroke-width="1.3"/></svg>
<svg style="left:0px;top:0px" width="1" height="1" viewBox="0 0 1 1" ><path d="M494 87 H508" stroke="#767676" stroke-width="1.5"/><path d="M494 99.1 H508" stroke="#767676" stroke-width="1.5"/><path d="M502 91 H508" stroke="#767676" stroke-width="1.5"/><path d="M502 95 H508" stroke="#767676" stroke-width="1.5"/><path d="M494.4 93 H500 M497.6 90.6 L500 93 L497.6 95.4" fill="none" stroke="#1e88d8" stroke-width="1.3"/></svg>
<div class="a" style="left:337px;top:107.2px;width:23.8px;height:24.3px;background:#ebebeb;border:1px solid #b8b8b8;border-radius:4px;"></div>
<svg style="left:0px;top:0px" width="1" height="1" viewBox="0 0 1 1" ><path d="M341.7 113.1 H356.3" stroke="#767676" stroke-width="1.5"/><path d="M341.7 117.1 H351.9" stroke="#767676" stroke-width="1.5"/><path d="M341.7 121.1 H356.3" stroke="#767676" stroke-width="1.5"/><path d="M341.7 125.1 H351.9" stroke="#767676" stroke-width="1.5"/></svg>
<svg style="left:0px;top:0px" width="1" height="1" viewBox="0 0 1 1" ><path d="M368 113.1 H382.2" stroke="#767676" stroke-width="1.5"/><path d="M370.4 117.1 H379.8" stroke="#767676" stroke-width="1.5"/><path d="M368 121.1 H382.2" stroke="#767676" stroke-width="1.5"/><path d="M370.4 125.1 H379.8" stroke="#767676" stroke-width="1.5"/></svg>
<svg style="left:0px;top:0px" width="1" height="1" viewBox="0 0 1 1" ><path d="M394 113.1 H408.2" stroke="#767676" stroke-width="1.5"/><path d="M398.4 117.1 H408.2" stroke="#767676" stroke-width="1.5"/><path d="M394 121.1 H408.2" stroke="#767676" stroke-width="1.5"/><path d="M398.4 125.1 H408.2" stroke="#767676" stroke-width="1.5"/></svg>
<svg style="left:0px;top:0px" width="1" height="1" viewBox="0 0 1 1" ><path d="M419.9 113.1 H434.3" stroke="#767676" stroke-width="1.5"/><path d="M419.9 117.1 H434.3" stroke="#767676" stroke-width="1.5"/><path d="M419.9 121.1 H434.3" stroke="#767676" stroke-width="1.5"/><path d="M419.9 125.1 H434.3" stroke="#767676" stroke-width="1.5"/></svg>
<div class="a" style="left:441px;top:108px;width:1px;height:23px;background:#d4d4d4;"></div>
<svg style="left:0px;top:0px" width="1" height="1" viewBox="0 0 1 1" ><path d="M455 113.1 H464.2" stroke="#767676" stroke-width="1.5"/><path d="M455 117.1 H464.2" stroke="#767676" stroke-width="1.5"/><path d="M455 121.1 H464.2" stroke="#767676" stroke-width="1.5"/><path d="M455 125.1 H464.2" stroke="#767676" stroke-width="1.5"/><path d="M450.4 112.6 V126 M448 115.2 L450.4 112.6 L452.8 115.2 M448 123.4 L450.4 126 L452.8 123.4" fill="none" stroke="#1e88d8" stroke-width="1.3"/></svg>
<svg style="left:469px;top:117.4px" width="7.4" height="5" viewBox="0 0 7.4 5" ><path d="M1 1 L3.7 4 L6.4 1" fill="none" stroke="#3b3b3b" stroke-width="1.1"/></svg>
<svg style="left:341px;top:137px" width="16.5" height="17" viewBox="0 0 16.5 17" ><path d="M3.2 7.6 L8.4 2.4 L13 7 L7.8 12.2 Z" fill="#fff" stroke="#444" stroke-width="1.1" stroke-linejoin="round"/><path d="M6.4 4.4 L6.4 1.6 C6.4 0.4 8.4 0.4 8.4 1.6 V2.6" fill="none" stroke="#444" stroke-width="1"/>
<path d="M12.2 5.2 C14 6.4 14.8 8 14.2 10 C13.6 8.4 13 7.6 12 7.2 Z" fill="#1b78d0" stroke="#1b78d0" stroke-width="0.8"/>
<rect x="0.6" y="12.9" width="15.2" height="3.5" fill="#fff" stroke="#a0a0a0" stroke-width="0.9"/></svg>
<svg style="left:364.1px;top:143.3px" width="7.4" height="5" viewBox="0 0 7.4 5" ><path d="M1 1 L3.7 4 L6.4 1" fill="none" stroke="#3b3b3b" stroke-width="1.1"/></svg>
<svg style="left:381.5px;top:137px" width="16" height="16.5" viewBox="0 0 16 16.5" ><path d="M0.8 0.8 H15.2 M0.8 0.8 V15 M15.2 0.8 V15 M8 0.8 V15 M0.8 8 H15.2" fill="none" stroke="#8a8a8a" stroke-width="1" stroke-dasharray="1 1"/><path d="M0.4 15.2 H15.6" stroke="#444" stroke-width="1.4"/><path d="M8 1 V15" stroke="#999" stroke-width="0.8"/></svg>
<svg style="left:404.8px;top:143.3px" width="7.4" height="5" viewBox="0 0 7.4 5" ><path d="M1 1 L3.7 4 L6.4 1" fill="none" stroke="#3b3b3b" stroke-width="1.1"/></svg>
<div class="a" style="left:418.3px;top:134px;width:1px;height:23.4px;background:#d4d4d4;"></div>
<span class="t" style="left:424.8px;top:135px;font-size:9.4px;line-height:13px;color:#1e88d8;font-weight:bold;">A</span>
<span class="t" style="left:425.2px;top:144px;font-size:9.2px;line-height:12px;color:#444;font-weight:bold;">Z</span>
<svg style="left:434px;top:138px" width="8" height="15.5" viewBox="0 0 8 15.5" ><path d="M4 0.4 V14.4 M0.8 11 L4 14.6 L7.2 11" fill="none" stroke="#444" stroke-width="1.2"/></svg>
<div class="a" style="left:447.3px;top:134px;width:1px;height:23.4px;background:#d4d4d4;"></div>
<svg style="left:456.5px;top:139px" width="10.5" height="13" viewBox="0 0 10.5 13" ><path d="M4.2 0.4 H10.2 V1.6 H9 V12.6 H7.8 V1.6 H6.2 V12.6 H5 V6.8 H4.2 C-0.2 6.8 -0.2 0.4 4.2 0.4 Z" fill="#444"/></svg>
<span class="t gl" style="left:393.8px;top:160px;font-size:11.2px;line-height:14px;letter-spacing:-0.224px;transform:scaleX(0.9257);">Paragraph</span>
<svg style="left:509px;top:163.6px" width="8" height="8" viewBox="0 0 8 8" ><path d="M0.6 5.4 V0.6 H5.4" fill="none" stroke="#444" stroke-width="1.1"/><path d="M2.8 2.8 L6.6 6.6" fill="none" stroke="#333" stroke-width="1.2"/><path d="M7.6 3.4 V7.6 H3.4 Z" fill="#333"/></svg>
<div class="a" style="left:520.2px;top:82px;width:1px;height:89.5px;background:#d9d9d9;"></div>
<div class="a" style="left:530px;top:89px;width:341.8px;height:60.4px;background:#fff;border:1px solid #e1e1e1;border-radius:5px;"></div>
<span class="t P" style="left:569.2px;top:110px;font-size:13.4px;line-height:17px;font-family:'Liberation Serif', serif;color:#111;letter-spacing:0.01px;">Cards</span>
<span class="t P" style="left:668px;top:110px;font-size:14.4px;line-height:18px;color:#1a1a1a;letter-spacing:0.288px;transform:scaleX(1.0599);">Normal</span>
<span class="t P" style="left:762.3px;top:110px;font-size:14.4px;line-height:18px;color:#1a1a1a;letter-spacing:0.288px;transform:scaleX(1.0118);">No Spacing</span>
<div class="a" style="left:856.2px;top:89.2px;width:1px;height:21px;background:#e4e4e4;"></div>
<svg style="left:860.3px;top:96.9px" width="7" height="4.8" viewBox="0 0 7 4.8" ><path d="M1 3.8 L3.5 1 L6 3.8" fill="none" stroke="#b5b5b5" stroke-width="1"/></svg>
<div class="a" style="left:856.2px;top:110.2px;width:15.6px;height:19px;border:1px solid #5e5e5e;background:#fff;"></div>
<svg style="left:860.2px;top:117.3px" width="7.2" height="5" viewBox="0 0 7.2 5" ><path d="M1 1 L3.6 4 L6.2 1" fill="none" stroke="#3b3b3b" stroke-width="1.1"/></svg>
<div class="a" style="left:856.2px;top:128.2px;width:15.6px;height:21.2px;border:1px solid #5e5e5e;background:#fff;border-radius:0 0 5px 0;"></div>
<div class="a" style="left:861px;top:135px;width:5.8px;height:1.1px;background:#3b3b3b;"></div>
<svg style="left:860.2px;top:137.1px" width="7.2" height="5" viewBox="0 0 7.2 5" ><path d="M1 1 L3.6 4 L6.2 1" fill="none" stroke="#3b3b3b" stroke-width="1.1"/></svg>
<span class="t gl" style="left:680.4px;top:160px;font-size:11.2px;line-height:14px;letter-spacing:-0.224px;transform:scaleX(0.879);">Styles</span>
<svg style="left:870.2px;top:163.6px" width="8" height="8" viewBox="0 0 8 8" ><path d="M0.6 5.4 V0.6 H5.4" fill="none" stroke="#444" stroke-width="1.1"/><path d="M2.8 2.8 L6.6 6.6" fill="none" stroke="#333" stroke-width="1.2"/><path d="M7.6 3.4 V7.6 H3.4 Z" fill="#333"/></svg>
<div class="a" style="left:881.4px;top:82px;width:1px;height:89.5px;background:#d9d9d9;"></div>
<svg style="left:893px;top:83.5px" width="31" height="31" viewBox="0 0 31 31" ><circle cx="19.5" cy="10.9" r="10" fill="#fdfdfd" stroke="#444" stroke-width="1.2"/><path d="M12.6 18 L1.2 29.4" stroke="#444" stroke-width="1.3"/></svg>
<span class="t ui" style="left:891px;top:117px;font-size:12.4px;line-height:16px;letter-spacing:-0.248px;transform:scaleX(0.9764);">Editing</span>
<svg style="left:904.7px;top:137.4px" width="7.4" height="5" viewBox="0 0 7.4 5" ><path d="M1 1 L3.7 4 L6.4 1" fill="none" stroke="#3b3b3b" stroke-width="1.2"/></svg>
<div class="a" style="left:935.3px;top:82px;width:1px;height:89.5px;background:#d9d9d9;"></div>
<svg style="left:954.5px;top:84px" width="21" height="32" viewBox="0 0 21 32" ><rect x="5" y="1" width="11.4" height="21.4" rx="5.7" fill="#86bcec" stroke="#1a6fc6" stroke-width="1.3"/><path d="M1.2 16.6 C1.2 28.6 20.2 28.6 20.2 16.6 M10.7 25.6 V31" fill="none" stroke="#444" stroke-width="1.2"/></svg>
<span class="t ui" style="left:946.9px;top:120px;font-size:12.4px;line-height:16px;letter-spacing:-0.248px;transform:scaleX(0.9826);">Dictate</span>
<svg style="left:960.7px;top:140.6px" width="7.4" height="5" viewBox="0 0 7.4 5" ><path d="M1 1 L3.7 4 L6.4 1" fill="none" stroke="#3b3b3b" stroke-width="1.2"/></svg>
<span class="t gl" style="left:952.7px;top:160px;font-size:11.2px;line-height:14px;letter-spacing:-0.224px;transform:scaleX(0.9255);">Voice</span>
<div class="a" style="left:993px;top:82px;width:1px;height:89.5px;background:#d9d9d9;"></div>
<svg style="left:1018.5px;top:84px" width="30" height="31" viewBox="0 0 30 31" ><rect x="0.8" y="2.4" width="21" height="27.4" fill="#ececec" stroke="#c9c9c9" stroke-width="1"/>
<g transform="rotate(-45 15 13)"><rect x="4" y="8.6" width="15" height="8.4" rx="1" fill="#f4f4f4" stroke="#bdbdbd" stroke-width="1.1"/><rect x="6.4" y="11.2" width="10" height="3.2" rx="1.6" fill="none" stroke="#c4c4c4" stroke-width="0.9"/><rect x="20" y="6.8" width="3.4" height="12" fill="#f4f4f4" stroke="#bdbdbd" stroke-width="1.1"/><rect x="23.4" y="9" width="5" height="7.6" fill="#f4f4f4" stroke="#bdbdbd" stroke-width="1.1"/></g></svg>
<span class="t" style="left:1004px;top:119px;font-size:12.4px;line-height:16px;color:#a3a3a3;letter-spacing:-0.248px;transform:scaleX(0.9801);">Sensitivity</span>
<svg style="left:1026.2px;top:139.4px" width="7.2" height="4.8" viewBox="0 0 7.2 4.8" ><path d="M1 1 L3.6 3.8 L6.2 1" fill="none" stroke="#b0b0b0" stroke-width="1"/></svg>
<span class="t gl" style="left:1006.6px;top:160px;font-size:11.2px;line-height:14px;letter-spacing:-0.224px;transform:scaleX(0.9768);">Sensitivity</span>
<div class="a" style="left:1066.5px;top:82px;width:1px;height:89.5px;background:#d9d9d9;"></div>
<svg style="left:1079.5px;top:84px" width="33" height="32" viewBox="0 0 33 32" ><path d="M22.6 11.2 H29.6" stroke="#185abd" stroke-width="4.2" stroke-linecap="round"/><path d="M17.6 18.2 H24" stroke="#185abd" stroke-width="4.2" stroke-linecap="round"/><path d="M10.9 25.2 H18.6" stroke="#185abd" stroke-width="4.2" stroke-linecap="round"/>
<path d="M22 1.8 C23 0.6 25.6 2.2 24.8 3.6 L8.8 26.6 L1.4 30.4 L2.4 22.4 L19.2 1.8 C20 0.8 21.4 0.8 22 1.8 Z" fill="#fff" stroke="#185abd" stroke-width="1.4" stroke-linejoin="round"/><path d="M2.4 25.6 L1.2 30.6 L5.6 28.4 Z" fill="#185abd"/></svg>
<span class="t ui" style="left:1080.5px;top:119px;font-size:12.4px;line-height:16px;letter-spacing:-0.248px;transform:scaleX(0.9875);">Editor</span>
<span class="t gl" style="left:1082.5px;top:160px;font-size:11.2px;line-height:14px;letter-spacing:-0.224px;transform:scaleX(0.9286);">Editor</span>
<div class="a" style="left:1124.2px;top:82px;width:1px;height:89.5px;background:#d9d9d9;"></div>
<svg style="left:1141.5px;top:85.8px" width="29" height="28.5" viewBox="0 0 29 28.5" ><rect x="0.7" y="0.7" width="27.6" height="27.2" fill="#fff" stroke="#d8541c" stroke-width="1.4"/>
<rect x="3.8" y="3.8" width="9.4" height="9.4" fill="#fff" stroke="#d8541c" stroke-width="1.2"/><rect x="15.8" y="3.8" width="9.4" height="9.4" fill="#fff" stroke="#d8541c" stroke-width="1.2"/><rect x="3.8" y="15.6" width="9.4" height="9.4" fill="#fff" stroke="#d8541c" stroke-width="1.2"/><rect x="15.8" y="15.6" width="9.4" height="9.4" fill="#fff" stroke="#d8541c" stroke-width="1.2"/></svg>
<span class="t ui" style="left:1134.7px;top:119px;font-size:12.4px;line-height:16px;letter-spacing:-0.059px;">Add-ins</span>
<span class="t gl" style="left:1137.5px;top:160px;font-size:11.2px;line-height:14px;letter-spacing:-0.224px;transform:scaleX(0.9706);">Add-ins</span>
<div class="a" style="left:1186.2px;top:82px;width:1px;height:89.5px;background:#d9d9d9;"></div>
<svg style="left:1252.6px;top:160.1px" width="11.6" height="7" viewBox="0 0 11.6 7" ><path d="M1 1 L5.8 6 L10.6 1" fill="none" stroke="#3b3b3b" stroke-width="1.2"/></svg>
<div class="a" style="left:0px;top:731px;width:1280px;height:20px;background:#f3f3f3;"></div>
<span class="t gl" style="left:10.3px;top:735px;font-size:11.3px;line-height:14px;letter-spacing:-0.226px;transform:scaleX(0.9126);">Page 1 of 21</span>
<span class="t gl" style="left:86.6px;top:735px;font-size:11.3px;line-height:14px;letter-spacing:-0.226px;transform:scaleX(0.971);">14423 words</span>
<span class="t gl" style="left:165px;top:735px;font-size:11.3px;line-height:14px;letter-spacing:-0.226px;transform:scaleX(0.9288);">Text Predictions: On</span>
<span class="t gl" style="left:291.5px;top:735px;font-size:11.3px;line-height:14px;letter-spacing:-0.226px;transform:scaleX(0.953);">Accessibility: Good to go</span>
<svg style="left:274px;top:734px" width="15" height="15" viewBox="0 0 15 15" fill="none" stroke="#3b3b3b" stroke-width="1.1"><circle cx="6" cy="2.2" r="1.5"/><path d="M0.8 4.6 C3 5.6 9 5.6 11.2 4.6 M4.2 5.4 L4.2 8.5 L2.6 13.6 M7.8 5.4 L7.8 7.6 M7.5 11.2 L9.6 13.4 L14 8.6"/></svg>
<svg style="left:929px;top:734px" width="14" height="15" viewBox="0 0 14 15" fill="none" stroke="#3b3b3b" stroke-width="1.1"><path d="M3.6 2.6 H8 L10.6 5.2 V12 H3.6 Z M8 2.6 V5.2 H10.6"/><path d="M0.6 3.2 V0.6 H3.2 M10.8 0.6 H13.4 V3.2 M13.4 11.8 V14.4 H10.8 M3.2 14.4 H0.6 V11.8"/></svg>
<span class="t gl" style="left:947px;top:735px;font-size:11.3px;line-height:14px;letter-spacing:-0.226px;transform:scaleX(0.8605);">Focus</span>
<svg style="left:997px;top:735px" width="14" height="13" viewBox="0 0 14 13" fill="none" stroke="#3b3b3b" stroke-width="1.1"><path d="M7 1.6 C5.2 0.4 2.6 0.4 0.6 1 V11.4 C2.6 10.8 5.2 10.8 7 12 C8.8 10.8 11.4 10.8 13.4 11.4 V1 C11.4 0.4 8.8 0.4 7 1.6 Z M7 1.6 V12"/><path d="M2.4 3.6 H5.2 M2.4 5.8 H5.2 M2.4 8 H5.2 M8.8 3.6 H11.6 M8.8 5.8 H11.6 M8.8 8 H11.6" stroke-width="0.9"/></svg>
<div class="a" style="left:1024px;top:731px;width:39px;height:20px;background:#dfdfdf;"></div>
<svg style="left:1038px;top:735px" width="13" height="14" viewBox="0 0 13 14" fill="none" stroke="#3b3b3b" stroke-width="1.1"><rect x="0.6" y="0.6" width="11.8" height="12.8"/><path d="M2.6 3.2 H10.4 M2.6 5.4 H10.4 M2.6 7.6 H10.4 M2.6 9.8 H10.4 M2.6 12 H10.4" stroke-width="0.9"/></svg>
<svg style="left:1076px;top:735px" width="15" height="14" viewBox="0 0 15 14" fill="none" stroke="#3b3b3b" stroke-width="1.1"><path d="M0.6 12 V0.6 H11.4 V5"/><path d="M2.4 3 H9.6 M2.4 5.2 H7.4 M2.4 7.4 H5.6 M2.4 9.6 H5.2" stroke-width="0.9"/><circle cx="10.2" cy="9.6" r="4" fill="#3b3b3b" stroke="none"/><path d="M6.4 9.6 H14 M10.2 5.8 V13.4 M10.2 5.8 C8.2 7.6 8.2 11.6 10.2 13.4 C12.2 11.6 12.2 7.6 10.2 5.8" stroke="#f3f3f3" stroke-width="0.7"/></svg>
<div class="a" style="left:1109px;top:741px;width:8px;height:1px;background:#444;"></div>
<div class="a" style="left:1122.5px;top:741px;width:98.5px;height:1px;background:#6a6a6a;"></div>
<div class="a" style="left:1168.5px;top:735.5px;width:5px;height:12px;background:#5a5a5a;"></div>
<div class="a" style="left:1226.5px;top:741px;width:8px;height:1px;background:#444;"></div>
<div class="a" style="left:1230px;top:737.5px;width:1px;height:8px;background:#444;"></div>
<span class="t gl" style="left:1246px;top:735px;font-size:11.3px;line-height:14px;letter-spacing:-0.226px;transform:scaleX(0.9569);">98%</span>
</div></body></html>
